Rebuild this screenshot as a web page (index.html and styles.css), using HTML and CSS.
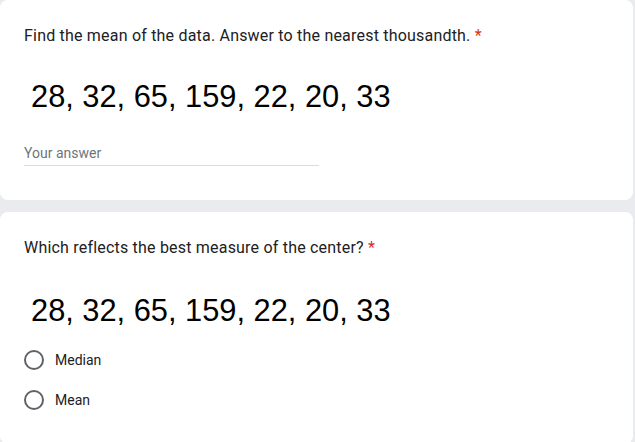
FILE: index.html
```html
<!DOCTYPE html>
<html>
<head>
<meta charset="utf-8">
<link rel="stylesheet" href="styles.css">
</head>
<body>
<div class="page">
  <div class="card card-first">
    <div class="question">Find the mean of the data. Answer to the nearest thousandth. <span class="req">*</span></div>
    <div class="data">28, 32, 65, 159, 22, 20, 33</div>
    <div class="answer"><span class="placeholder">Your answer</span></div>
  </div>
  <div class="card">
    <div class="question">Which reflects the best measure of the center? <span class="req">*</span></div>
    <div class="data data-second">28, 32, 65, 159, 22, 20, 33</div>
    <div class="options">
      <label class="option"><span class="radio"></span><span class="label">Median</span></label>
      <label class="option"><span class="radio"></span><span class="label">Mean</span></label>
    </div>
  </div>
</div>
</body>
</html>
```

FILE: styles.css
```css
html, body {
  margin: 0;
  padding: 0;
  background: #e9ebee;
  font-family: Roboto, "Liberation Sans", Arial, sans-serif;
  color: #202124;
}
.page {
  width: 633px;
  display: flex;
  flex-direction: column;
  gap: 12px;
}
.card {
  background: #fff;
  border-radius: 8px;
  padding: 24px 24px 24px 24px;
}
.card-first {
  padding-bottom: 34px;
}
.question {
  font-size: 16px;
  line-height: 24px;
  letter-spacing: 0.2px;
}
.req {
  color: #d93025;
}
.data {
  font-family: "Liberation Sans", Arial, sans-serif;
  font-size: 30.8px;
  line-height: 36px;
  color: #000;
  margin-top: 31px;
  padding-left: 7px;
}
.data-second {
  margin-top: 33px;
}
.answer {
  margin-top: 28px;
  width: 295px;
  border-bottom: 1px solid #dadce0;
  padding-bottom: 2px;
}
.placeholder {
  font-size: 14px;
  line-height: 20px;
  color: #70757a;
  display: block;
}
.options {
  margin-top: 11px;
  display: flex;
  flex-direction: column;
}
.option {
  display: flex;
  align-items: center;
  height: 40px;
}
.radio {
  width: 16px;
  height: 16px;
  border: 2px solid #5f6368;
  border-radius: 50%;
  flex: none;
}
.label {
  font-size: 14px;
  line-height: 20px;
  margin-left: 11px;
  color: #202124;
}
```
